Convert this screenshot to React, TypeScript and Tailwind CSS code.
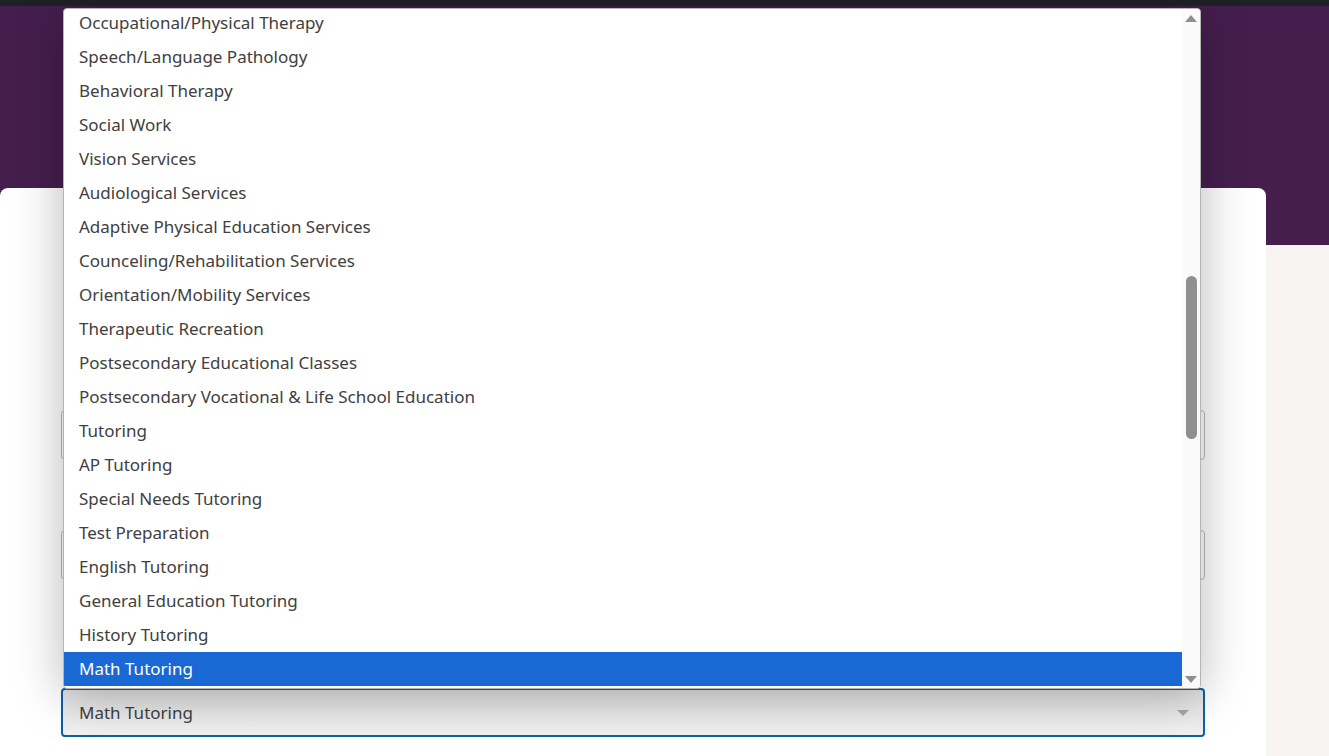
import React from "react";

const services = [
  "Occupational/Physical Therapy",
  "Speech/Language Pathology",
  "Behavioral Therapy",
  "Social Work",
  "Vision Services",
  "Audiological Services",
  "Adaptive Physical Education Services",
  "Counceling/Rehabilitation Services",
  "Orientation/Mobility Services",
  "Therapeutic Recreation",
  "Postsecondary Educational Classes",
  "Postsecondary Vocational & Life School Education",
  "Tutoring",
  "AP Tutoring",
  "Special Needs Tutoring",
  "Test Preparation",
  "English Tutoring",
  "General Education Tutoring",
  "History Tutoring",
  "Math Tutoring",
];

const selected = "Math Tutoring";

const Field = () => (
  <div className="h-[50px] rounded border border-[#b9b9b9] bg-white" />
);

// native select list, opened upward over the form
const Dropdown = () => (
  <div className="absolute left-[63px] top-[8px] flex h-[681px] w-[1138px] overflow-hidden rounded border border-[#b5b5b5] bg-white shadow-[0_6px_50px_rgba(0,0,0,0.28)]">
    <ul className="-mt-[3px] flex-1">
      {services.map((s) => (
        <li
          key={s}
          className={
            s === selected
              ? "flex h-[34px] items-center bg-[#1a68d4] px-[15px] text-white"
              : "flex h-[34px] items-center px-[15px] text-[#404040]"
          }
        >
          {s}
        </li>
      ))}
    </ul>
    <div className="flex w-[18px] flex-col items-center bg-[#fafafa] pt-[6px] pb-[5px]">
      <div className="h-0 w-0 border-x-[6px] border-b-[7px] border-x-transparent border-b-[#8f8f8f]" />
      <div className="mt-[254px] h-[163px] w-[11px] rounded-full bg-[#8f8f8f]" />
      <div className="flex-1" />
      <div className="h-0 w-0 border-x-[6px] border-t-[7px] border-x-transparent border-t-[#8f8f8f]" />
    </div>
  </div>
);

export default function App() {
  return (
    <div className="relative h-screen overflow-hidden bg-[#f8f4f1] font-['Noto_Sans',sans-serif] text-[17px]">
      <div className="h-[6px] bg-[#1e2225]" />
      <div className="h-[239px] bg-[#451e4e]" />
      <div className="-mt-[57px] flex h-[600px] w-[1266px] flex-col rounded-t-lg bg-white px-[61px] pt-[222px]">
        <Field />
        <div className="mt-[70px]">
          <Field />
        </div>
        <div className="mt-[108px] flex h-[49px] items-center justify-between rounded border-2 border-[#0b61a8] bg-gradient-to-b from-[#e2e2e2] to-[#f2f2f2] pl-[16px] pr-[14px] text-[#404040]">
          <span>{selected}</span>
          <span className="h-0 w-0 border-x-[6px] border-t-[6px] border-x-transparent border-t-[#a8a8a8]" />
        </div>
      </div>
      <Dropdown />
    </div>
  );
}
